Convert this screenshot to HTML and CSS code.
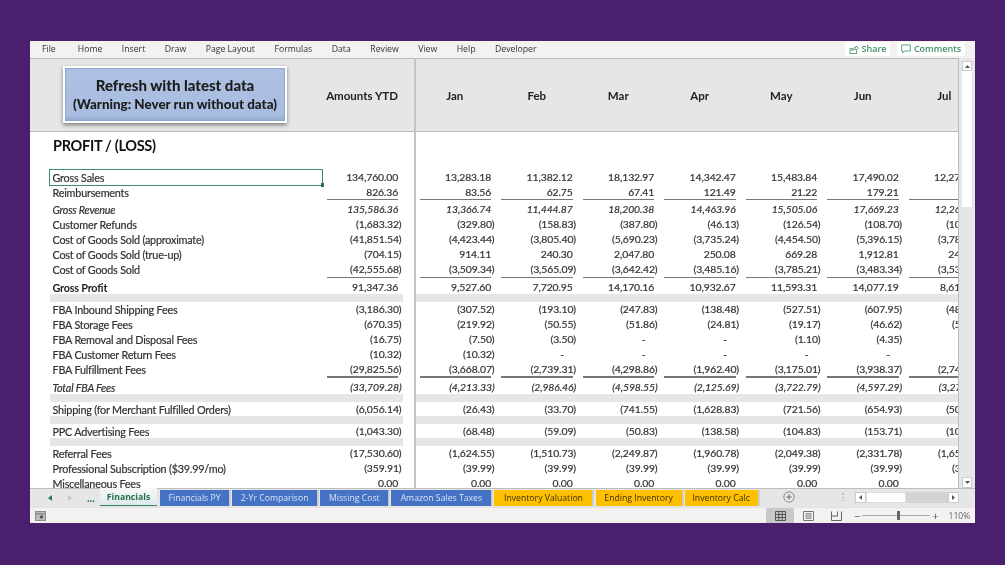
FILE: index.html
```html
<!DOCTYPE html>
<html lang="en">
<head>
<meta charset="utf-8">
<title>Financials</title>
<link rel="stylesheet" href="styles.css">
</head>
<body>
<div class="window">
  <header class="ribbon">
    <nav class="menu">
      <span>File</span><span>Home</span><span>Insert</span><span>Draw</span><span>Page Layout</span><span>Formulas</span><span>Data</span><span>Review</span><span>View</span><span>Help</span><span>Developer</span>
    </nav>
    <div class="actions">
      <div class="action share">
        <svg width="10" height="10" viewBox="0 0 10 10"><path d="M1 4.5h2.5M1 4.5V9.5H7.5V6.5M3 7C3 4.5 5 3.5 7 3.5V2L9.5 4.2 7 6.3V5C5.5 5 4 5.5 3 7Z" fill="none" stroke="#4f9a75" stroke-width=".9"/></svg>
        Share
      </div>
      <div class="action comments">
        <svg width="10" height="10" viewBox="0 0 10 10"><path d="M.7 1H9.3V7H3.6L1.8 9V7H.7Z" fill="none" stroke="#4f9a75" stroke-width=".9"/></svg>
        Comments
      </div>
    </div>
  </header>

  <div class="main">
    <section class="sheet">
      <div class="head">
        <div class="macro-wrap"><div class="macro"><b>Refresh with latest data</b><b class="warn">(Warning: Never run without data)</b></div></div>
        <div class="ytd">Amounts YTD</div>
        <div class="mh first">Jan</div><div class="mh">Feb</div><div class="mh">Mar</div><div class="mh">Apr</div><div class="mh">May</div><div class="mh">Jun</div><div class="mh">Jul</div>
      </div>
      <h1 class="title">PROFIT / (LOSS)</h1>

      <div class="r"><span class="l sel">Gross Sales</span><span class="n">134,760.00</span><span class="n">13,283.18</span><span class="n">11,382.12</span><span class="n">18,132.97</span><span class="n">14,342.47</span><span class="n">15,483.84</span><span class="n">17,490.02</span><span class="n">12,277.40</span></div>
      <div class="r u"><span class="l">Reimbursements</span><span class="n">826.36</span><span class="n">83.56</span><span class="n">62.75</span><span class="n">67.41</span><span class="n">121.49</span><span class="n">21.22</span><span class="n">179.21</span><span class="n">5.50</span></div>
      <div class="r after i"><span class="l">Gross Revenue</span><span class="n">135,586.36</span><span class="n">13,366.74</span><span class="n">11,444.87</span><span class="n">18,200.38</span><span class="n">14,463.96</span><span class="n">15,505.06</span><span class="n">17,669.23</span><span class="n">12,265.90</span></div>
      <div class="r"><span class="l">Customer Refunds</span><span class="p">(1,683.32)</span><span class="p">(329.80)</span><span class="p">(158.83)</span><span class="p">(387.80)</span><span class="p">(46.13)</span><span class="p">(126.54)</span><span class="p">(108.70)</span><span class="p">(105.10)</span></div>
      <div class="r"><span class="l">Cost of Goods Sold (approximate)</span><span class="p">(41,851.54)</span><span class="p">(4,423.44)</span><span class="p">(3,805.40)</span><span class="p">(5,690.23)</span><span class="p">(3,735.24)</span><span class="p">(4,454.50)</span><span class="p">(5,396.15)</span><span class="p">(3,785.60)</span></div>
      <div class="r"><span class="l">Cost of Goods Sold (true-up)</span><span class="p">(704.15)</span><span class="n">914.11</span><span class="n">240.30</span><span class="n">2,047.80</span><span class="n">250.08</span><span class="n">669.28</span><span class="n">1,912.81</span><span class="n">245.20</span></div>
      <div class="r u"><span class="l">Cost of Goods Sold</span><span class="p">(42,555.68)</span><span class="p">(3,509.34)</span><span class="p">(3,565.09)</span><span class="p">(3,642.42)</span><span class="p">(3,485.16)</span><span class="p">(3,785.21)</span><span class="p">(3,483.34)</span><span class="p">(3,534.40)</span></div>
      <div class="r after2"><span class="l bold">Gross Profit</span><span class="n">91,347.36</span><span class="n">9,527.60</span><span class="n">7,720.95</span><span class="n">14,170.16</span><span class="n">10,932.67</span><span class="n">11,593.31</span><span class="n">14,077.19</span><span class="n">8,612.30</span></div>
      <div class="band"></div>
      <div class="r"><span class="l">FBA Inbound Shipping Fees</span><span class="p">(3,186.30)</span><span class="p">(307.52)</span><span class="p">(193.10)</span><span class="p">(247.83)</span><span class="p">(138.48)</span><span class="p">(527.51)</span><span class="p">(607.95)</span><span class="p">(486.10)</span></div>
      <div class="r"><span class="l">FBA Storage Fees</span><span class="p">(670.35)</span><span class="p">(219.92)</span><span class="p">(50.55)</span><span class="p">(51.86)</span><span class="p">(24.81)</span><span class="p">(19.17)</span><span class="p">(46.62)</span><span class="p">(55.10)</span></div>
      <div class="r"><span class="l">FBA Removal and Disposal Fees</span><span class="p">(16.75)</span><span class="p">(7.50)</span><span class="p">(3.50)</span><span class="d">-</span><span class="d">-</span><span class="p">(1.10)</span><span class="p">(4.35)</span><span class="d">-</span></div>
      <div class="r"><span class="l">FBA Customer Return Fees</span><span class="p">(10.32)</span><span class="p">(10.32)</span><span class="d">-</span><span class="d">-</span><span class="d">-</span><span class="d">-</span><span class="d">-</span><span class="d">-</span></div>
      <div class="r u"><span class="l">FBA Fulfillment Fees</span><span class="p">(29,825.56)</span><span class="p">(3,668.07)</span><span class="p">(2,739.31)</span><span class="p">(4,298.86)</span><span class="p">(1,962.40)</span><span class="p">(3,175.01)</span><span class="p">(3,938.37)</span><span class="p">(2,745.20)</span></div>
      <div class="r after i"><span class="l">Total FBA Fees</span><span class="p">(33,709.28)</span><span class="p">(4,213.33)</span><span class="p">(2,986.46)</span><span class="p">(4,598.55)</span><span class="p">(2,125.69)</span><span class="p">(3,722.79)</span><span class="p">(4,597.29)</span><span class="p">(3,276.40)</span></div>
      <div class="band"></div>
      <div class="r"><span class="l">Shipping (for Merchant Fulfilled Orders)</span><span class="p">(6,056.14)</span><span class="p">(26.43)</span><span class="p">(33.70)</span><span class="p">(741.55)</span><span class="p">(1,628.83)</span><span class="p">(721.56)</span><span class="p">(654.93)</span><span class="p">(505.30)</span></div>
      <div class="band"></div>
      <div class="r"><span class="l">PPC Advertising Fees</span><span class="p">(1,043.30)</span><span class="p">(68.48)</span><span class="p">(59.09)</span><span class="p">(50.83)</span><span class="p">(138.58)</span><span class="p">(104.83)</span><span class="p">(153.71)</span><span class="p">(105.20)</span></div>
      <div class="band"></div>
      <div class="r"><span class="l">Referral Fees</span><span class="p">(17,530.60)</span><span class="p">(1,624.55)</span><span class="p">(1,510.73)</span><span class="p">(2,249.87)</span><span class="p">(1,960.78)</span><span class="p">(2,049.38)</span><span class="p">(2,331.78)</span><span class="p">(1,654.20)</span></div>
      <div class="r"><span class="l">Professional Subscription ($39.99/mo)</span><span class="p">(359.91)</span><span class="p">(39.99)</span><span class="p">(39.99)</span><span class="p">(39.99)</span><span class="p">(39.99)</span><span class="p">(39.99)</span><span class="p">(39.99)</span><span class="p">(39.99)</span></div>
      <div class="r"><span class="l">Miscellaneous Fees</span><span class="n">0.00</span><span class="n">0.00</span><span class="n">0.00</span><span class="n">0.00</span><span class="n">0.00</span><span class="n">0.00</span><span class="n">0.00</span><span class="n"></span></div>
    </section>

    <aside class="vscroll">
      <div class="vbtn"><svg width="5" height="3" viewBox="0 0 5 3"><path d="M2.5 0 5 3H0Z" fill="#555"/></svg></div>
      <div class="vthumb"></div>
      <div class="vbtn down"><svg width="5" height="3" viewBox="0 0 5 3"><path d="M0 0H5L2.5 3Z" fill="#555"/></svg></div>
    </aside>
  </div>

  <div class="tabbar">
    <div class="tabnav">
      <svg width="4" height="6" viewBox="0 0 4 6"><path d="M4 0V6L0 3Z" fill="#2c7a52"/></svg>
      <svg width="4" height="6" viewBox="0 0 4 6"><path d="M0 0V6L4 3Z" fill="#c4c4c4"/></svg>
      <span class="more">...</span>
    </div>
    <div class="tabs">
      <div class="tab active">Financials</div>
      <div class="tab blue">Financials PY</div>
      <div class="tab blue">2-Yr Comparison</div>
      <div class="tab blue">Missing Cost</div>
      <div class="tab blue">Amazon Sales Taxes</div>
      <div class="tab gold">Inventory Valuation</div>
      <div class="tab gold">Ending Inventory</div>
      <div class="tab gold">Inventory Calc</div>
    </div>
    <svg class="add" width="12" height="12" viewBox="0 0 12 12"><circle cx="6" cy="6" r="5.2" fill="none" stroke="#8c8c8c"/><path d="M6 3.2V8.8M3.2 6H8.8" stroke="#777" stroke-width="1.2"/></svg>
    <div class="grip"></div>
    <div class="hscroll">
      <div class="hbtn"><svg width="3" height="5" viewBox="0 0 3 5"><path d="M3 0V5L0 2.5Z" fill="#555"/></svg></div>
      <div class="hthumb"></div>
      <div class="htrack"></div>
      <div class="hbtn"><svg width="3" height="5" viewBox="0 0 3 5"><path d="M0 0V5L3 2.5Z" fill="#555"/></svg></div>
    </div>
  </div>

  <footer class="status">
    <svg class="rec" width="11" height="10" viewBox="0 0 11 10"><rect x=".5" y=".5" width="10" height="9" fill="#bdbdbd" stroke="#8f8f8f"/><path d="M1 2.8H10" stroke="#777"/><circle cx="6.5" cy="6" r="1.7" fill="#555"/></svg>
    <div class="views">
      <div class="view on"><svg width="11" height="10" viewBox="0 0 11 10"><path d="M.5.5H10.5V9.5H.5ZM.5 3.5H10.5M.5 6.5H10.5M3.8.5V9.5M7.2.5V9.5" fill="none" stroke="#555"/></svg></div>
      <div class="view"><svg width="11" height="10" viewBox="0 0 11 10"><path d="M.5.5H10.5V9.5H.5Z" fill="none" stroke="#777"/><path d="M3 2.5H8V7.5H3Z" fill="#bbb" stroke="#888" stroke-width=".7"/></svg></div>
      <div class="view"><svg width="11" height="10" viewBox="0 0 11 10"><path d="M.5.5V9.5H10.5V.5M6.5.5V5H.5" fill="none" stroke="#666"/></svg></div>
    </div>
    <div class="zoom">
      <span class="zb">−</span>
      <div class="slider"><div class="knob"></div></div>
      <span class="zb">+</span>
      <span class="pct">110%</span>
    </div>
  </footer>
</div>
</body>
</html>
```

FILE: styles.css
```css
* { box-sizing: border-box; }
html, body { margin: 0; height: 100%; }
body {
  background: #4a206e;
  padding: 41px 30px 42px;
  overflow: hidden;
  font-family: "Lato", "Liberation Sans", sans-serif;
  color: #333;
}
.window {
  height: 482px;
  display: flex;
  flex-direction: column;
  background: #f3f2f1;
  filter: blur(.35px);
}

/* ribbon */
.ribbon {
  height: 17px;
  flex: none;
  padding-bottom: 2px;
  display: flex;
  align-items: center;
  justify-content: space-between;
  font-family: "Open Sans", sans-serif;
  font-size: 8.7px;
  color: #333;
}
.menu { display: flex; gap: 19.5px; padding-left: 12px; }
.menu span:first-child { margin-right: 2.5px; }
.actions { display: flex; gap: 7px; padding-right: 10px; }
.action {
  height: 14px;
  background: #fff;
  display: flex;
  align-items: center;
  justify-content: center;
  gap: 3px;
  font-size: 9px;
  font-weight: 600;
  color: #3f8f68;
}
.share { width: 45px; }
.comments { width: 68px; }

/* sheet */
.main { flex: 1; display: flex; min-height: 0; }
.sheet {
  width: 929px;
  flex: none;
  background: #fff;
  position: relative;
  overflow: hidden;
  border-right: 1px solid #bdbdbd;
  font-size: 10.8px;
  letter-spacing: -.2px;
  -webkit-text-stroke: .2px;
}
.sheet::before {
  content: "";
  position: absolute;
  left: 384px;
  top: 0;
  bottom: 0;
  width: 1.5px;
  background: #c4c4c4;
}
.head {
  height: 74px;
  background: #e6e6e6;
  border-top: 1px solid #bdbdbd;
  border-bottom: 1px solid #bdbdbd;
  display: grid;
  grid-template-columns: 293px 75px 17px 79.5px repeat(6, 81.5px);
  align-items: center;
  font-weight: 700;
  font-size: 11.5px;
  letter-spacing: 0;
  -webkit-text-stroke: 0;
  color: #222;
  white-space: nowrap;
}
.ytd { text-align: right; grid-column: 2; }
.mh { text-align: center; padding-left: 3px; }
.mh.first { grid-column: 4; padding-left: 0; }
.macro-wrap { padding-left: 33px; }
.macro {
  width: 224px;
  height: 57px;
  margin-bottom: 1px;
  border: 2px solid #fff;
  background: linear-gradient(#aec1e3, #a9bde0 88%, #93a8cf);
  box-shadow: 0 2px 4px rgba(0,0,0,.45), inset 0 0 1px 1px #8fa6cf;
  display: flex;
  flex-direction: column;
  align-items: center;
  justify-content: center;
  color: #1c1c1c;
}
.macro b { font-size: 15px; line-height: 19px; }
.macro b.warn { font-size: 13.4px; line-height: 18px; }
.title {
  margin: 0;
  height: 37.5px;
  padding: 0 0 10px 23px;
  display: flex;
  align-items: center;
  font-size: 14.5px;
  font-weight: 700;
  letter-spacing: -.3px;
  -webkit-text-stroke: 0;
  color: #111;
}

/* rows */
.r {
  height: 15.1px;
  padding-left: 20px;
  display: grid;
  grid-template-columns: 272px 79.5px 13.5px 79.5px repeat(6, 81.5px);
  align-items: center;
  line-height: 15px;
  white-space: nowrap;
}
.r > :nth-child(3) { grid-column: 4; }
.after { margin-top: 2.4px; }
.after2 { margin-top: 2px; }
.i { font-style: italic; }
.bold { font-weight: 700; color: #222; -webkit-text-stroke: 0; }
.l { padding-left: 2.5px; height: 100%; }
.n, .p, .d {
  text-align: right;
  position: relative;
  height: 100%;
  font-size: 10.4px;
  letter-spacing: -.1px;
}
.n { padding-right: 3.3px; }
.d { padding-right: 12px; }
.u > .n::after, .u > .p::after {
  content: "";
  position: absolute;
  left: 6.8px;
  right: 3.3px;
  bottom: -.5px;
  height: 1.5px;
  background: #777;
}
.u > :nth-child(2)::after { left: 4.7px; }
.u > :nth-child(3)::after { left: 5px; }
.sel {
  position: relative;
  outline: 1.6px solid #3c8f66;
}
.sel::after {
  content: "";
  position: absolute;
  right: -2px;
  bottom: -2px;
  width: 3.5px;
  height: 3.5px;
  background: #217346;
}
.band {
  height: 7.6px;
  margin-top: -.6px;
  background: linear-gradient(to right,
    transparent 20px, #e6e6e6 20px, #e6e6e6 373px,
    transparent 373px, transparent 386px, #e6e6e6 386px);
}

/* vertical scrollbar */
.vscroll {
  flex: 1;
  background: #e6e6e6;
  padding: 3px 3px 0;
  display: flex;
  flex-direction: column;
}
.vbtn {
  height: 10px;
  background: #fff;
  border: 1px solid #ccc;
  display: flex;
  align-items: center;
  justify-content: center;
  flex: none;
}
.vbtn.down { margin-top: auto; height: 11px; }
.vthumb { height: 136px; background: #fff; flex: none; }

/* tabs */
.tabbar {
  height: 19px;
  flex: none;
  background: #e6e6e6;
  border-top: 1px solid #bdbdbd;
  display: flex;
  align-items: flex-start;
}
.tabnav {
  width: 70px;
  height: 17px;
  flex: none;
  display: flex;
  align-items: center;
  padding-left: 18px;
  gap: 16px;
}
.more { font-size: 11px; font-weight: 700; color: #2c7a52; margin-left: -1px; line-height: 10px; }
.tabs {
  display: grid;
  grid-template-columns: 57px 69px 85px 68px 100px 98px 86px 73px;
  column-gap: 3.1px;
  height: 16px;
  font-family: "Open Sans", sans-serif;
  font-size: 8.7px;
  margin-top: 1px;
}
.tab {
  display: flex;
  align-items: center;
  justify-content: center;
  box-shadow: 1.6px 0 0 #c9c9c9;
  padding-bottom: 1px;
}
.tab.active {
  margin-top: -2px;
  height: 18px;
  padding-bottom: 0;
  background: linear-gradient(#f7f9f8, #dfe8f0);
  border-bottom: 1.5px solid #2f8a5c;
  color: #217346;
  font-weight: 700;
  box-shadow: none;
}
.tab.blue { background: #4472c4; color: #d9e2f3; }
.tab.gold { background: #ffc000; color: #3a2f00; }
.add { margin: 2px 0 0 25px; flex: none; }
.grip {
  width: 2px;
  height: 9px;
  margin: 4px 0 0 47px;
  flex: none;
  background: repeating-linear-gradient(#bbb 0 1.5px, transparent 1.5px 3.5px);
}
.hscroll {
  display: flex;
  height: 11px;
  margin: 3px 0 0 11px;
  width: 104px;
  flex: none;
}
.hbtn {
  width: 11px;
  background: #fff;
  border: 1px solid #ccc;
  display: flex;
  align-items: center;
  justify-content: center;
  flex: none;
}
.hthumb { width: 40px; background: #fff; border: 1px solid #ddd; }
.htrack { flex: 1; background: #d4d4d4; }

/* status */
.status {
  height: 16px;
  flex: none;
  display: flex;
  align-items: center;
  justify-content: space-between;
  padding-left: 5px;
  border-top: 1px solid #e2e2e2;
  font-family: "Open Sans", sans-serif;
}
.views { margin-left: auto; display: flex; height: 100%; }
.view {
  width: 28px;
  display: flex;
  align-items: center;
  justify-content: center;
}
.view.on { background: #c9c9c9; }
.zoom {
  width: 125px;
  padding-left: 4px;
  display: flex;
  align-items: center;
  gap: 2px;
  color: #555;
}
.zb { font-size: 11px; line-height: 10px; }
.slider {
  width: 68px;
  height: 1px;
  background: #aaa;
  position: relative;
}
.knob {
  position: absolute;
  left: 35px;
  top: -4px;
  width: 3px;
  height: 9px;
  background: #666;
}
.pct { font-size: 8.5px; margin-left: 8px; color: #666; }
```
